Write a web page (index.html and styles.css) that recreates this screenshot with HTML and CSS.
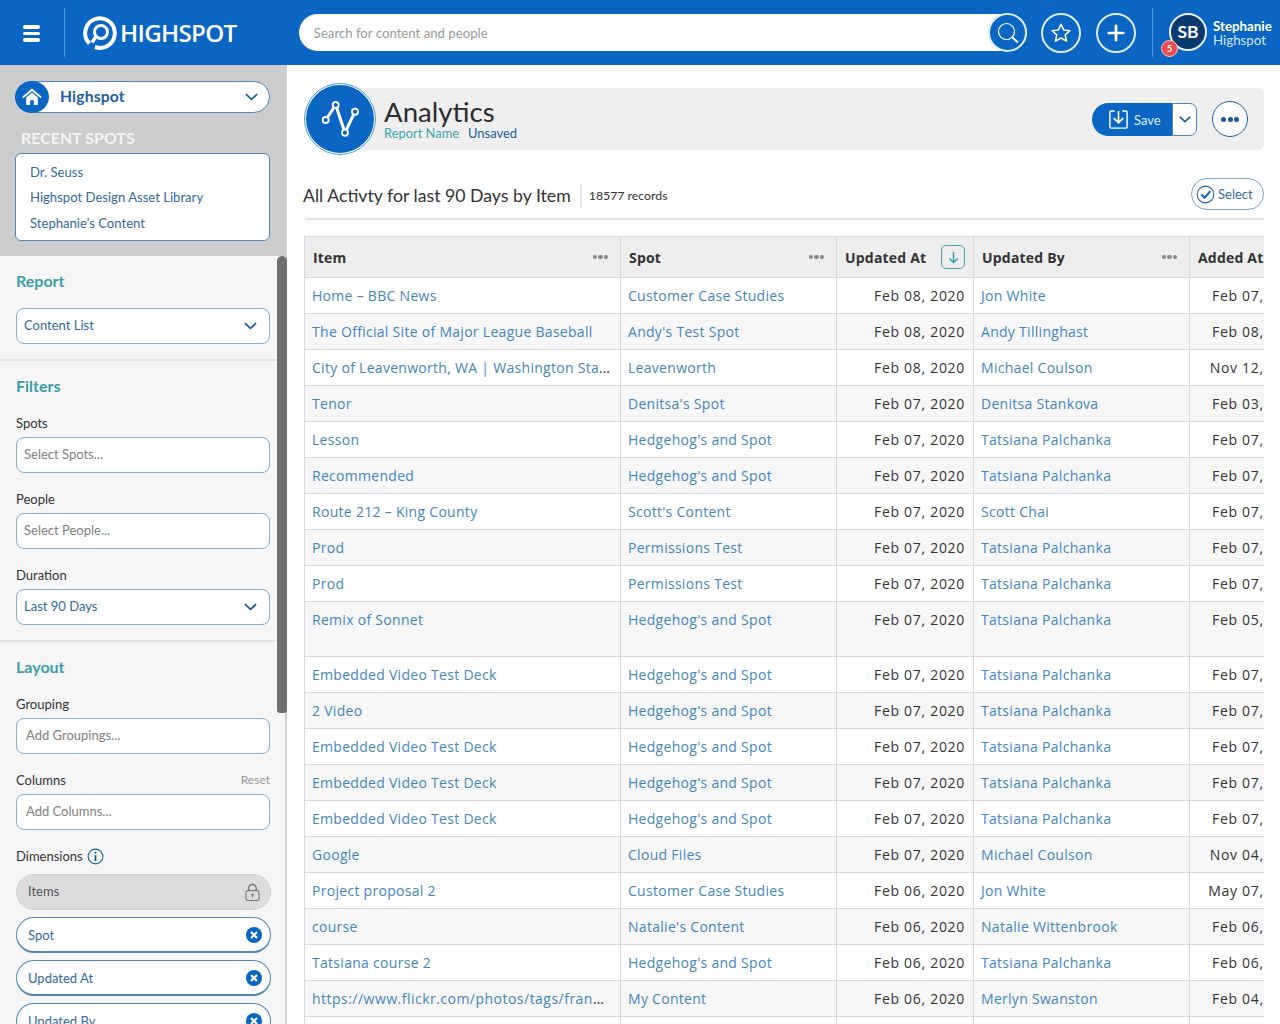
FILE: index.html
```html
<!DOCTYPE html>
<html lang="en">
<head>
<meta charset="utf-8">
<title>Highspot Analytics</title>
<link rel="stylesheet" href="styles.css">
</head>
<body>
<header class="topbar">
  <div class="burger"><span></span><span></span><span></span></div>
  <div class="logo">
    <svg class="logo-mark" viewBox="0 0 34 34"><path d="M6.500 27.500A14.800 14.800 0 1 1 12 31" fill="none" stroke="#fff" stroke-width="4"/><circle cx="18" cy="16" r="6.500" fill="none" stroke="#fff" stroke-width="3"/><path d="M13 20.500L9 26.500" stroke="#fff" stroke-width="3.500"/></svg>
    <span class="logo-text">HIGHSPOT</span>
  </div>
  <div class="search">
    <span class="search-text">Search for content and people</span>
    <span class="search-btn"><svg viewBox="0 0 24 24" width="24" height="24"><circle cx="10.500" cy="10.500" r="8" fill="none" stroke="#fff" stroke-width="1.200"/><path d="M16.500 16.500L22 21.500" stroke="#fff" stroke-width="2"/></svg></span>
  </div>
  <span class="round-btn star-btn"><svg viewBox="0 0 24 24" width="22" height="22"><path d="M12 2.500l2.900 6.200 6.700.8-5 4.600 1.400 6.700-6-3.400-6 3.400 1.400-6.700-5-4.600 6.700-.8z" fill="none" stroke="#fff" stroke-width="1.700" stroke-linejoin="round"/></svg></span>
  <span class="round-btn plus-btn"><svg viewBox="0 0 20 20" width="18" height="18"><path d="M10 2v16M2 10h16" stroke="#fff" stroke-width="3" stroke-linecap="round"/></svg></span>
  <div class="user">
    <span class="avatar">SB</span>
    <span class="badge">5</span>
    <div class="user-text"><strong>Stephanie</strong><span>Highspot</span></div>
  </div>
</header>
<div class="main">
  <aside class="sidebar">
    <div class="spot-panel">
      <div class="spot-select">
        <span class="home-icon"><svg viewBox="0 0 22 20" width="20" height="18"><path d="M1.500 10L11 2l9.500 8" fill="none" stroke="#fff" stroke-width="2" stroke-linecap="round"/><path d="M4.500 10.500L11 5l6.500 5.500V19h-4.500v-5.500h-4V19H4.500z" fill="#fff"/></svg></span>
        <span class="spot-name">Highspot</span>
        <svg class="chev" viewBox="0 0 14 8" width="13" height="8"><path d="M1 1l6 5.500L13 1" fill="none" stroke="#17589c" stroke-width="1.800"/></svg>
      </div>
      <div class="recent-title">RECENT SPOTS</div>
      <div class="recent-box">
        <a>Dr. Seuss</a>
        <a>Highspot Design Asset Library</a>
        <a>Stephanie's Content</a>
      </div>
    </div>
    <div class="side-section report-section">
      <h3>Report</h3>
      <div class="field select-field"><span>Content List</span><svg class="chev" viewBox="0 0 14 8" width="13" height="8"><path d="M1 1l6 5.500L13 1" fill="none" stroke="#17589c" stroke-width="1.800"/></svg></div>
    </div>
    <div class="side-section filters-section">
      <h3>Filters</h3>
      <label class="first-label">Spots</label>
      <div class="field"><span class="ph">Select Spots...</span></div>
      <label>People</label>
      <div class="field"><span class="ph">Select People...</span></div>
      <label>Duration</label>
      <div class="field select-field"><span>Last 90 Days</span><svg class="chev" viewBox="0 0 14 8" width="13" height="8"><path d="M1 1l6 5.500L13 1" fill="none" stroke="#17589c" stroke-width="1.800"/></svg></div>
    </div>
    <div class="side-section layout-section">
      <h3>Layout</h3>
      <label class="first-label">Grouping</label>
      <div class="field wide-pad"><span class="ph">Add Groupings...</span></div>
      <label class="split-label"><span>Columns</span><em>Reset</em></label>
      <div class="field wide-pad"><span class="ph">Add Columns...</span></div>
      <label class="dim-label">Dimensions <svg viewBox="0 0 18 18" width="17" height="17"><circle cx="9" cy="9" r="7.800" fill="none" stroke="#17589c" stroke-width="1.100"/><circle cx="9" cy="5" r="1.100" fill="#17589c"/><path d="M9 7.500v6.500" stroke="#17589c" stroke-width="1.800"/></svg></label>
      <div class="pill locked"><span>Items</span><svg viewBox="0 0 16 20" width="15" height="20"><path d="M4 9V6a4 4 0 0 1 8 0v3" fill="none" stroke="#777" stroke-width="1.500"/><rect x="1" y="8.500" width="14" height="10.500" rx="2" fill="none" stroke="#777" stroke-width="1.200"/><circle cx="8" cy="13" r="1.300" fill="#777"/><path d="M8 13v3" stroke="#777"/></svg></div>
      <div class="pill"><span>Spot</span><svg viewBox="0 0 16 16" width="16" height="16"><circle cx="8" cy="8" r="8" fill="#0a66c2"/><path d="M5 5l6 6M11 5l-6 6" stroke="#fff" stroke-width="2.200"/></svg></div>
      <div class="pill"><span>Updated At</span><svg viewBox="0 0 16 16" width="16" height="16"><circle cx="8" cy="8" r="8" fill="#0a66c2"/><path d="M5 5l6 6M11 5l-6 6" stroke="#fff" stroke-width="2.200"/></svg></div>
      <div class="pill"><span>Updated By</span><svg viewBox="0 0 16 16" width="16" height="16"><circle cx="8" cy="8" r="8" fill="#0a66c2"/><path d="M5 5l6 6M11 5l-6 6" stroke="#fff" stroke-width="2.200"/></svg></div>
    </div>
    <div class="scroll-thumb"></div>
  </aside>
  <section class="content">
    <div class="title-row">
      <span class="analytics-icon"><svg viewBox="0 0 42 42" width="42" height="42"><path d="M6.700 22L16.700 7l9.300 27.700L36 13.700" fill="none" stroke="#fff" stroke-width="3"/><g fill="#0a66c2" stroke="#fff" stroke-width="1.800"><circle cx="6.700" cy="22" r="3"/><circle cx="16.700" cy="7" r="3"/><circle cx="26" cy="34.700" r="3"/><circle cx="36" cy="13.700" r="3"/></g></svg></span>
      <div class="title-band">
        <div class="title-text">
          <h1>Analytics</h1>
          <div class="report-name"><span>Report Name</span><b>Unsaved</b></div>
        </div>
        <div class="save-group">
          <span class="save-btn"><svg viewBox="0 0 22 22" width="21" height="21"><path d="M7 2H3.500A1.500 1.500 0 0 0 2 3.500v15A1.500 1.500 0 0 0 3.500 20h15a1.500 1.500 0 0 0 1.500-1.500v-15A1.500 1.500 0 0 0 18.500 2H15" fill="none" stroke="#fff" stroke-width="1.500"/><path d="M11 2v12M6 9.500l5 5 5-5" fill="none" stroke="#fff" stroke-width="1.800"/></svg>Save</span>
          <span class="save-drop"><svg viewBox="0 0 14 8" width="12" height="7"><path d="M1 1l6 5.500L13 1" fill="none" stroke="#17589c" stroke-width="1.800"/></svg></span>
        </div>
        <span class="more-btn"><i></i><i></i><i></i></span>
      </div>
    </div>
    <div class="list-head">
      <h2>All Activty for last 90 Days by Item</h2>
      <span class="records">18577 records</span>
      <span class="select-btn"><svg viewBox="0 0 20 20" width="19" height="19"><circle cx="10" cy="10" r="8.800" fill="none" stroke="#17589c" stroke-width="1.100"/><path d="M5.500 10l3.500 3.500 6-7" fill="none" stroke="#0a66c2" stroke-width="2.200"/></svg>Select</span>
    </div>
    <div class="table-wrap">
      <table class="grid">
        <colgroup><col class="c1"><col class="c2"><col class="c3"><col class="c4"><col class="c5"></colgroup>
        <thead>
          <tr>
            <th><div class="th-in">Item<span class="dots"><i></i><i></i><i></i></span></div></th>
            <th><div class="th-in">Spot<span class="dots"><i></i><i></i><i></i></span></div></th>
            <th><div class="th-in">Updated At<span class="sort"><svg viewBox="0 0 12 14" width="11" height="13"><path d="M6 1v11M1.500 8L6 12.500 10.500 8" fill="none" stroke="#2b9aa0" stroke-width="1.500"/></svg></span></div></th>
            <th><div class="th-in">Updated By<span class="dots"><i></i><i></i><i></i></span></div></th>
            <th><div class="th-in">Added At</div></th>
          </tr>
        </thead>
        <tbody>
          <tr><td><a>Home – BBC News</a></td><td><a>Customer Case Studies</a></td><td class="d">Feb 08, 2020</td><td><a>Jon White</a></td><td class="d">Feb 07, 2020</td></tr>
          <tr><td><a>The Official Site of Major League Baseball</a></td><td><a>Andy's Test Spot</a></td><td class="d">Feb 08, 2020</td><td><a>Andy Tillinghast</a></td><td class="d">Feb 08, 2020</td></tr>
          <tr><td><a>City of Leavenworth, WA | Washington State Travel</a></td><td><a>Leavenworth</a></td><td class="d">Feb 08, 2020</td><td><a>Michael Coulson</a></td><td class="d">Nov 12, 2019</td></tr>
          <tr><td><a>Tenor</a></td><td><a>Denitsa's Spot</a></td><td class="d">Feb 07, 2020</td><td><a>Denitsa Stankova</a></td><td class="d">Feb 03, 2020</td></tr>
          <tr><td><a>Lesson</a></td><td><a>Hedgehog's and Spot</a></td><td class="d">Feb 07, 2020</td><td><a>Tatsiana Palchanka</a></td><td class="d">Feb 07, 2020</td></tr>
          <tr><td><a>Recommended</a></td><td><a>Hedgehog's and Spot</a></td><td class="d">Feb 07, 2020</td><td><a>Tatsiana Palchanka</a></td><td class="d">Feb 07, 2020</td></tr>
          <tr><td><a>Route 212 – King County</a></td><td><a>Scott's Content</a></td><td class="d">Feb 07, 2020</td><td><a>Scott Chai</a></td><td class="d">Feb 07, 2020</td></tr>
          <tr><td><a>Prod</a></td><td><a>Permissions Test</a></td><td class="d">Feb 07, 2020</td><td><a>Tatsiana Palchanka</a></td><td class="d">Feb 07, 2020</td></tr>
          <tr><td><a>Prod</a></td><td><a>Permissions Test</a></td><td class="d">Feb 07, 2020</td><td><a>Tatsiana Palchanka</a></td><td class="d">Feb 07, 2020</td></tr>
          <tr class="tall"><td><a>Remix of Sonnet</a></td><td><a>Hedgehog's and Spot</a></td><td class="d">Feb 07, 2020</td><td><a>Tatsiana Palchanka</a></td><td class="d">Feb 05, 2020</td></tr>
          <tr><td><a>Embedded Video Test Deck</a></td><td><a>Hedgehog's and Spot</a></td><td class="d">Feb 07, 2020</td><td><a>Tatsiana Palchanka</a></td><td class="d">Feb 07, 2020</td></tr>
          <tr><td><a>2 Video</a></td><td><a>Hedgehog's and Spot</a></td><td class="d">Feb 07, 2020</td><td><a>Tatsiana Palchanka</a></td><td class="d">Feb 07, 2020</td></tr>
          <tr><td><a>Embedded Video Test Deck</a></td><td><a>Hedgehog's and Spot</a></td><td class="d">Feb 07, 2020</td><td><a>Tatsiana Palchanka</a></td><td class="d">Feb 07, 2020</td></tr>
          <tr><td><a>Embedded Video Test Deck</a></td><td><a>Hedgehog's and Spot</a></td><td class="d">Feb 07, 2020</td><td><a>Tatsiana Palchanka</a></td><td class="d">Feb 07, 2020</td></tr>
          <tr><td><a>Embedded Video Test Deck</a></td><td><a>Hedgehog's and Spot</a></td><td class="d">Feb 07, 2020</td><td><a>Tatsiana Palchanka</a></td><td class="d">Feb 07, 2020</td></tr>
          <tr><td><a>Google</a></td><td><a>Cloud Files</a></td><td class="d">Feb 07, 2020</td><td><a>Michael Coulson</a></td><td class="d">Nov 04, 2019</td></tr>
          <tr><td><a>Project proposal 2</a></td><td><a>Customer Case Studies</a></td><td class="d">Feb 06, 2020</td><td><a>Jon White</a></td><td class="d">May 07, 2019</td></tr>
          <tr><td><a>course</a></td><td><a>Natalie's Content</a></td><td class="d">Feb 06, 2020</td><td><a>Natalie Wittenbrook</a></td><td class="d">Feb 06, 2020</td></tr>
          <tr><td><a>Tatsiana course 2</a></td><td><a>Hedgehog's and Spot</a></td><td class="d">Feb 06, 2020</td><td><a>Tatsiana Palchanka</a></td><td class="d">Feb 06, 2020</td></tr>
          <tr><td class="url"><a>https://www.flickr.com/photos/tags/france/interesting</a></td><td><a>My Content</a></td><td class="d">Feb 06, 2020</td><td><a>Merlyn Swanston</a></td><td class="d">Feb 04, 2020</td></tr>
          <tr><td></td><td></td><td></td><td></td><td></td></tr>
        </tbody>
      </table>
    </div>
  </section>
</div>
</body>
</html>
```
FILE: styles.css
```css
* { box-sizing: border-box; }
html, body { margin: 0; height: 1024px; overflow: hidden; }
body { font-family: Lato, "Open Sans", sans-serif; color: #333; background: #fff; }

/* top bar */
.topbar { height: 65px; background: #0a66c2; display: flex; align-items: center; color: #fff; }
.burger { width: 65px; height: 49px; padding: 17px 24px 0 23px; border-right: 1px solid #4f94d8; display: flex; flex-direction: column; gap: 3px; }
.burger span { display: block; height: 3.5px; background: #fff; border-radius: 2px; }
.logo { display: flex; align-items: center; margin-left: 18px; width: 216px; }
.logo-mark { width: 34px; height: 34px; }
.logo-text { font-family: "Open Sans", sans-serif; font-size: 24.2px; font-weight: 600; margin-left: 3px; letter-spacing: -0.7px; }
.search { width: 729px; height: 37px; background: #fff; border-radius: 19px; display: flex; align-items: center; justify-content: space-between; }
.search-text { margin-left: 15px; font-size: 13.2px; color: #9a9a9a; }
.search-btn { width: 39px; height: 39px; border-radius: 50%; background: #0a66c2; border: 2px solid #dcebf8; display: flex; align-items: center; justify-content: center; flex: none; }
.round-btn { width: 40px; height: 40px; border-radius: 50%; border: 2px solid #dcebf8; display: flex; align-items: center; justify-content: center; flex: none; }
.star-btn { margin-left: 14px; }
.plus-btn { margin-left: 15px; }
.user { margin-left: 16px; height: 49px; border-left: 1px solid #4f94d8; padding-left: 16px; display: flex; align-items: center; position: relative; flex: none; width: 128px; }
.avatar { width: 38px; height: 38px; margin-top: -2px; border-radius: 50%; background: #0b3a6f; border: 2px solid #e6f0fa; font-size: 17.5px; font-weight: 700; display: flex; align-items: center; justify-content: center; flex: none; }
.badge { position: absolute; left: 8px; top: 32px; width: 17px; height: 17px; border-radius: 50%; background: #ee4b50; border: 1px solid #f5c6c8; font-size: 9px; font-weight: 700; display: flex; align-items: center; justify-content: center; }
.user-text { margin-left: 6px; font-size: 13.3px; line-height: 14px; white-space: nowrap; }
.user-text strong { display: block; font-weight: 700; }
.user-text span { display: block; color: #cfe2f5; }

.main { display: flex; height: 959px; }

/* sidebar */
.sidebar { width: 287px; flex: none; background: #f6f6f7; box-shadow: inset -2px 0 0 #cfcfcf; position: relative; overflow: hidden; }
.spot-panel { background: #cccccc; height: 191px; padding: 16px 17px 0 15px; }
.spot-select { height: 32px; background: #fff; border: 1px solid #4c87bd; border-radius: 16px; display: flex; align-items: center; }
.home-icon { width: 34px; height: 32px; margin-left: -1px; border-radius: 50%; background: #0a66c2; display: flex; align-items: center; justify-content: center; flex: none; }
.spot-name { margin-left: 11px; margin-top: -2px; font-size: 15.6px; font-weight: 700; color: #21609f; flex: 1; letter-spacing: .2px; }
.chev { flex: none; }
.spot-select .chev { margin-right: 11px; }
.recent-title { margin-top: 16px; padding-left: 6px; height: 18px; line-height: 18px; color: #f5f5f5; font-size: 15.8px; font-weight: 700; letter-spacing: .1px; }
.recent-box { margin-top: 6px; height: 88px; background: #fff; border: 1px solid #4c87bd; border-radius: 6px; padding: 6px 14px; }
.recent-box a { display: block; height: 25.4px; line-height: 25.4px; color: #33699f; font-size: 13.1px; }
.side-section { padding: 0 17px 0 16px; border-bottom: 2px solid #e3e3e3; }
.side-section h3 { margin: 0; font-size: 16px; line-height: 20px; font-weight: 700; color: #3a9ea4; }
.report-section { padding-top: 15px; height: 105px; }
.report-section h3 { margin-bottom: 17px; }
.filters-section { padding-top: 15px; height: 281px; }
.layout-section { padding-top: 15px; border-bottom: 0; }
.side-section label { display: block; font-size: 13px; line-height: 16px; color: #333; margin: 18px 0 6px; }
.side-section .first-label { margin-top: 19px; }
.split-label { display: flex !important; justify-content: space-between; }
.split-label em { font-style: normal; font-size: 12px; color: #999; }
.dim-label { display: flex !important; align-items: center; gap: 4px; margin-bottom: 10px !important; height: 16px; }
.field { height: 36px; background: #fff; border: 1px solid #86aecf; border-radius: 8px; display: flex; align-items: center; justify-content: space-between; padding: 0 7px; font-size: 13px; color: #33699f; }
.field span { margin-top: -2px; }
.select-field .chev { margin-right: 5px; }
.ph { color: #808080; }
.wide-pad { padding-left: 9px; }
.pill { width: 255px; height: 36px; margin-bottom: 7px; border: 1px solid #4c87bd; border-bottom-width: 2px; border-radius: 18px; background: #fff; display: flex; align-items: center; justify-content: space-between; padding: 0 8px 0 11px; font-size: 13px; color: #33699f; }
.locked { background: #dcdcdc; border: 1px solid #d2d2d2; color: #555; padding-right: 10px; }
.locked span { margin-top: -2px; }
.scroll-thumb { position: absolute; left: 277px; top: 191px; width: 10px; height: 457px; border-radius: 5px 5px 3px 3px; background: #6f6f6f; }

/* content */
.content { flex: 1; padding: 18px 16px 0 17px; min-width: 0; }
.title-row { display: flex; height: 72px; }
.analytics-icon { width: 72px; height: 72px; border-radius: 50%; background: #0a66c2; border: 2px solid #fff; outline: 1px solid #4c9ad8; outline-offset: -1px; display: flex; align-items: center; justify-content: center; flex: none; position: relative; z-index: 1; }
.title-band { flex: 1; margin: 5px 0 5px -36px; padding: 0 16px 0 44px; background: #efefef; border-radius: 0 6px 6px 0; display: flex; align-items: center; }
.title-text { flex: 1; margin-top: -2px; }
.title-text h1 { margin: 0; font-size: 27.6px; line-height: 32px; font-weight: 400; color: #2d2d2d; }
.report-name { font-size: 12.9px; line-height: 16px; margin-top: -3px; color: #3fa7ad; }
.report-name b { font-weight: 400; color: #21609f; margin-left: 9px; }
.save-group { display: flex; margin-top: 1px; }
.save-btn { width: 80px; height: 33px; background: #0a66c2; color: #dcebf8; border-radius: 17px 0 0 17px; display: flex; align-items: center; gap: 5px; padding-left: 16px; font-size: 13px; }
.save-drop { width: 25px; height: 33px; background: #fff; border: 1px solid #4c87bd; border-radius: 0 7px 7px 0; display: flex; align-items: center; justify-content: center; }
.more-btn { margin-left: 15px; width: 36px; height: 36px; border-radius: 50%; background: #fff; border: 1px solid #21609f; display: flex; align-items: center; justify-content: center; gap: 1.5px; flex: none; }
.more-btn i { width: 5px; height: 5px; border-radius: 50%; background: #17589c; }
.list-head { margin: 24px 0 0 1px; height: 41px; display: flex; align-items: center; border-bottom: 2px solid #e3e3e3; padding-bottom: 9px; }
.list-head h2 { margin: 2px 0 0 -2px; padding-right: 9px; font-size: 17.7px; line-height: 23px; font-weight: 400; color: #333; border-right: 2px solid #e5e5e5; }
.records { margin-left: 7px; font-size: 12.3px; color: #333; flex: 1; padding-top: 3px; }
.select-btn { width: 73px; height: 32px; border: 1px solid #7ba6cc; border-radius: 16px; display: flex; align-items: center; gap: 3px; padding-left: 4px; font-size: 13px; color: #33699f; }

/* table */
.table-wrap { margin-top: 16px; width: 960px; overflow: hidden; }
.grid { border-collapse: separate; border-spacing: 0; table-layout: fixed; width: 1007px; font-family: "Open Sans", sans-serif; font-size: 14px; border-top: 1px solid #d9d9dd; border-left: 1px solid #d9d9dd; }
.c1 { width: 316px; } .c2 { width: 216px; } .c3 { width: 137px; } .c4 { width: 216px; } .c5 { width: 122px; }
.grid th { height: 41px; background: #eeeeee; border-right: 1px solid #d9d9dd; border-bottom: 1px solid #d9d9dd; padding: 0 8px; text-align: left; font-weight: 700; color: #333; letter-spacing: .2px; white-space: nowrap; }
.th-in { display: flex; align-items: center; justify-content: space-between; }
.dots { display: flex; gap: 1px; margin-right: 4px; }
.dots i { width: 4.5px; height: 4.5px; border-radius: 50%; background: #888; }
.sort { width: 24px; height: 24px; border: 1px solid #4aa5aa; border-radius: 5px; display: flex; align-items: center; justify-content: center; }
.grid td { height: 36px; border-right: 1px solid #d9d9dd; border-bottom: 1px solid #d9d9dd; padding: 8px 10px 0 7px; vertical-align: top; line-height: 19px; letter-spacing: .29px; white-space: nowrap; overflow: hidden; text-overflow: ellipsis; background: #fff; }
.grid tbody tr:nth-child(even) td { background: #f7f7f8; }
.grid .tall td { height: 55px; }
.grid a { color: #4486bf; }
.grid .d { text-align: right; color: #333; padding-right: 8px; letter-spacing: .7px; }
.grid .url { letter-spacing: .48px; }
```
